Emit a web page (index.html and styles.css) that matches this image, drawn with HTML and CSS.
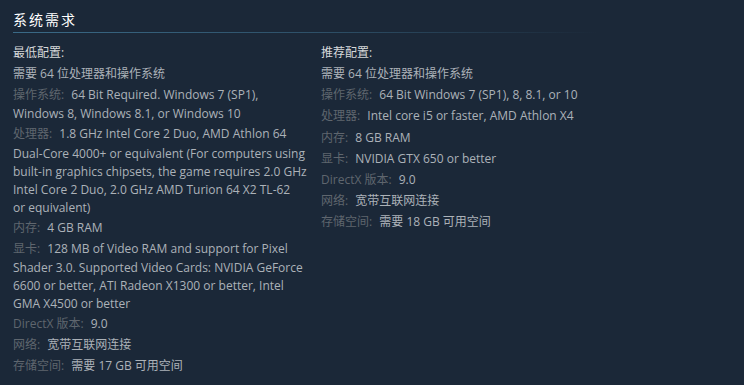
FILE: index.html
```html
<!DOCTYPE html>
<html lang="zh-CN">
<head>
<meta charset="utf-8">
<title>系统需求</title>
<link rel="stylesheet" href="styles.css">
</head>
<body>
<div class="sysreq">
  <h2 class="sysreq-title">系统需求</h2>
  <div class="sysreq-cols">
    <div class="sysreq-col">
      <div class="col-head">最低配置:</div>
      <ul class="req-list">
        <li>需要 64 位处理器和操作系统</li>
        <li><span class="lbl">操作系统:</span> 64 Bit Required. Windows 7 (SP1), Windows 8, Windows 8.1, or Windows 10</li>
        <li><span class="lbl">处理器:</span> 1.8 GHz Intel Core 2 Duo, AMD Athlon 64 Dual-Core 4000+ or equivalent (For computers using built-in graphics chipsets, the game requires 2.0 GHz Intel Core 2 Duo, 2.0 GHz AMD Turion 64 X2 TL-62 or&nbsp;equivalent)</li>
        <li><span class="lbl">内存:</span> 4 GB RAM</li>
        <li><span class="lbl">显卡:</span> 128 MB of Video RAM and support for Pixel Shader 3.0. Supported Video Cards: NVIDIA GeForce 6600 or better, ATI Radeon X1300 or better, Intel GMA X4500 or better</li>
        <li><span class="lbl">DirectX 版本:</span> 9.0</li>
        <li><span class="lbl">网络:</span> 宽带互联网连接</li>
        <li><span class="lbl">存储空间:</span> 需要 17 GB 可用空间</li>
      </ul>
    </div>
    <div class="sysreq-col">
      <div class="col-head">推荐配置:</div>
      <ul class="req-list">
        <li>需要 64 位处理器和操作系统</li>
        <li><span class="lbl">操作系统:</span> 64 Bit Windows 7 (SP1), 8, 8.1, or 10</li>
        <li><span class="lbl">处理器:</span> Intel core i5 or faster, AMD Athlon X4</li>
        <li><span class="lbl">内存:</span> 8 GB RAM</li>
        <li><span class="lbl">显卡:</span> NVIDIA GTX 650 or better</li>
        <li><span class="lbl">DirectX 版本:</span> 9.0</li>
        <li><span class="lbl">网络:</span> 宽带互联网连接</li>
        <li><span class="lbl">存储空间:</span> 需要 18 GB 可用空间</li>
      </ul>
    </div>
  </div>
</div>
</body>
</html>
```
FILE: styles.css
```css
html, body {
  margin: 0;
  padding: 0;
  background: #1b2838;
}

body {
  font-family: "Open Sans", "Noto Sans CJK SC", sans-serif;
  color: #acb2b8;
}

.sysreq {
  width: 616px;
  padding: 10px 13px 0;
}

.sysreq-title {
  margin: 0 0 11px;
  padding: 0 0 3px;
  font-size: 14px;
  line-height: 20px;
  font-weight: normal;
  letter-spacing: 2px;
  color: #ffffff;
  background-image: linear-gradient(to right, #3a6a87 0%, rgba(58, 106, 135, 0.6) 50%, rgba(58, 106, 135, 0) 95%);
  background-repeat: no-repeat;
  background-position: left bottom;
  background-size: 100% 1px;
}

.sysreq-cols {
  display: flex;
  gap: 10px;
}

.sysreq-col {
  width: 298px;
  font-size: 12px;
  line-height: 18px;
}

.col-head {
  color: #d6d8da;
  margin-bottom: 1px;
}

.req-list {
  list-style: none;
  margin: 0;
  padding: 0;
}

.req-list li {
  margin: 0;
  padding: 0;
}

.req-list li::first-line {
  line-height: 21.2px;
}

.lbl {
  color: #5f666e;
  margin-right: 4px;
}
```
